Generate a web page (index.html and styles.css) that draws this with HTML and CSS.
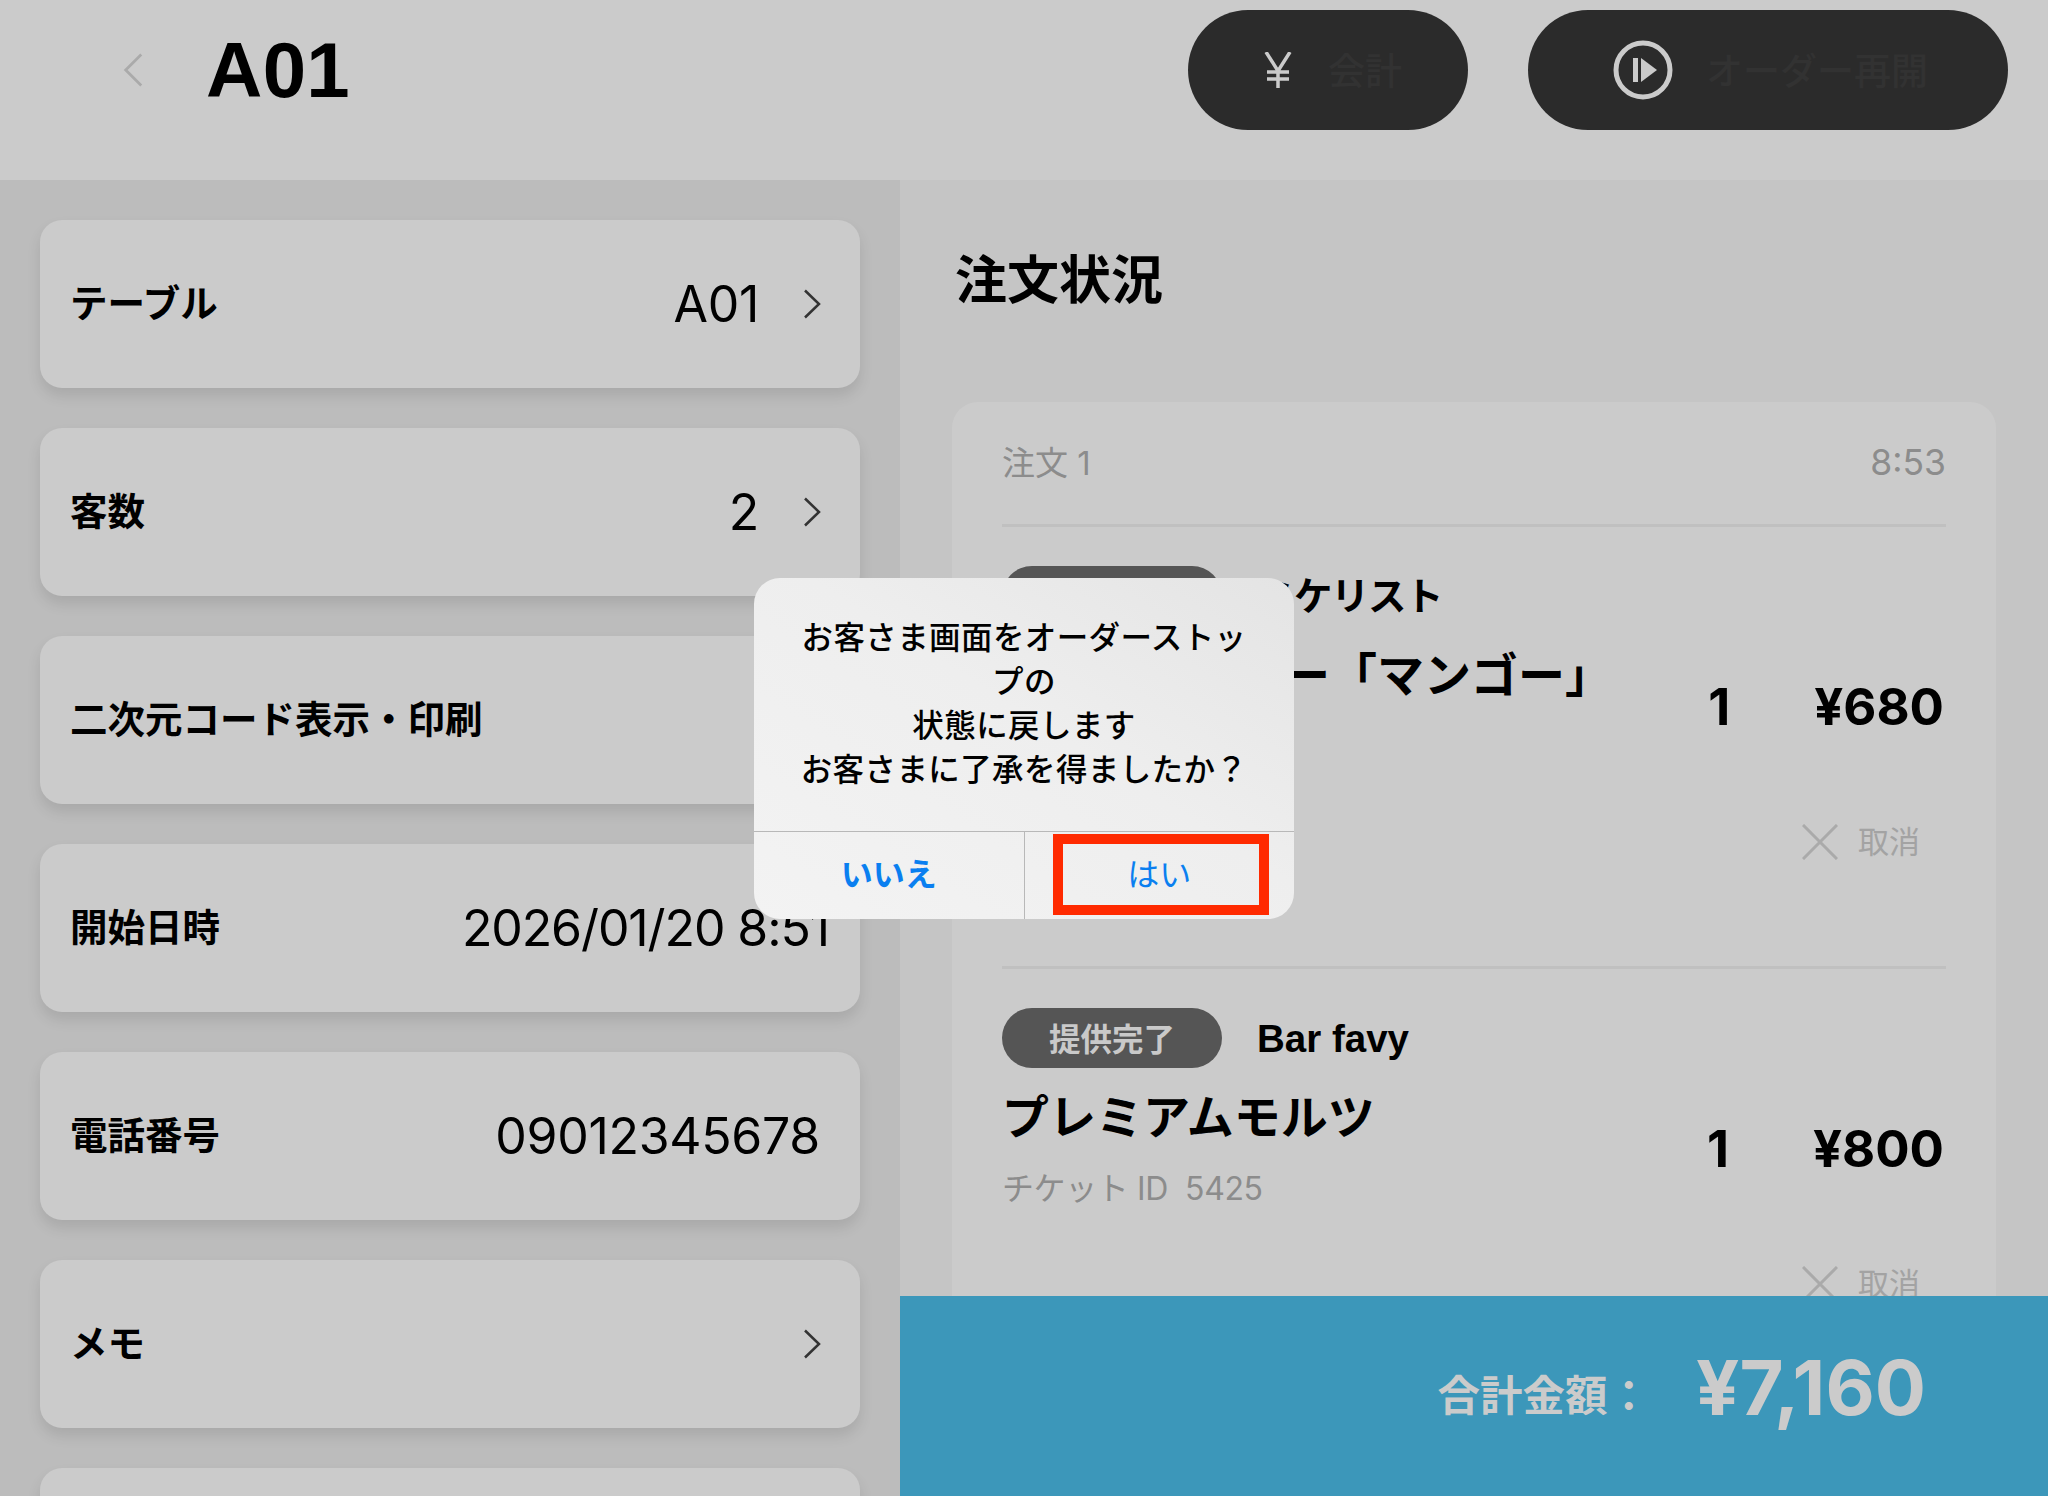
FILE: index.html
```html
<!DOCTYPE html>
<html lang="ja">
<head>
<meta charset="utf-8">
<title>A01</title>
<link rel="stylesheet" href="styles.css">
</head>
<body>
<div class="app">
  <header class="topbar">
    <div class="top-left">
      <svg class="back" viewBox="0 0 24 38"><path d="M21 2 4 19l17 17"/></svg>
      <h1 class="title">A01</h1>
    </div>
    <div class="top-actions">
      <button class="pill pill-pay">
        <svg class="yen" viewBox="0 0 28 36"><path d="M2 0 14 19 26 0M14 19v17M3 20h22M3 27h22"/></svg>
        <span>会計</span>
      </button>
      <button class="pill pill-resume">
        <svg class="resume" viewBox="0 0 60 60"><circle cx="30" cy="30" r="27"/><path class="bar" d="M20 18h5v24h-5z"/><path class="tri" d="M28 18 44 30 28 42z"/></svg>
        <span>オーダー再開</span>
      </button>
    </div>
  </header>
  <main class="body">
    <aside class="side">
      <div class="row"><span class="label">テーブル</span><span class="value">A01</span><svg class="chev" viewBox="0 0 18 30"><path d="M2 1.500 16 15 2 28.500"/></svg></div>
      <div class="row"><span class="label">客数</span><span class="value">2</span><svg class="chev" viewBox="0 0 18 30"><path d="M2 1.500 16 15 2 28.500"/></svg></div>
      <div class="row"><span class="label">二次元コード表示・印刷</span><span class="value"></span><svg class="chev" viewBox="0 0 18 30"><path d="M2 1.500 16 15 2 28.500"/></svg></div>
      <div class="row"><span class="label">開始日時</span><span class="value value-date">2026/01/20 8:51</span></div>
      <div class="row"><span class="label">電話番号</span><span class="value value-tel">09012345678</span></div>
      <div class="row"><span class="label">メモ</span><span class="value"></span><svg class="chev" viewBox="0 0 18 30"><path d="M2 1.500 16 15 2 28.500"/></svg></div>
      <div class="row"></div>
    </aside>
    <section class="orders">
      <h2 class="heading">注文状況</h2>
      <div class="order-card">
        <div class="order-head"><span>注文 1</span><span class="order-time">8:53</span></div>
        <article class="item">
          <div class="item-top"><span class="tag">提供完了</span><span class="shop shop-tight">ミケリスト</span></div>
          <div class="item-body">
            <div class="item-info">
              <div class="item-name">フルーツサワー「マンゴー」</div>
              <div class="ticket">チケット ID&nbsp; 5424</div>
            </div>
            <div class="qty">1</div>
            <div class="price">¥680</div>
          </div>
          <div class="cancel"><svg viewBox="0 0 36 36"><path d="M1 1l34 34M35 1 1 35"/></svg><span>取消</span></div>
        </article>
        <article class="item">
          <div class="item-top"><span class="tag">提供完了</span><span class="shop">Bar favy</span></div>
          <div class="item-body">
            <div class="item-info">
              <div class="item-name">プレミアムモルツ</div>
              <div class="ticket">チケット ID&nbsp; 5425</div>
            </div>
            <div class="qty">1</div>
            <div class="price">¥800</div>
          </div>
          <div class="cancel"><svg viewBox="0 0 36 36"><path d="M1 1l34 34M35 1 1 35"/></svg><span>取消</span></div>
        </article>
      </div>
      <div class="total">
        <span class="total-label">合計金額：</span>
        <span class="total-value">¥7,160</span>
      </div>
    </section>
  </main>
  <div class="dialog">
    <p class="dialog-text">お客さま画面をオーダーストッ<br>プの<br>状態に戻します<br>お客さまに了承を得ましたか？</p>
    <div class="dialog-actions">
      <button class="dialog-btn dialog-no">いいえ</button>
      <button class="dialog-btn">はい</button>
    </div>
    <div class="highlight"></div>
  </div>
</div>
</body>
</html>
```
FILE: styles.css
```css
* { box-sizing: border-box; }
html, body { margin: 0; padding: 0; }
body {
  font-family: "Inter", "Noto Sans CJK JP", sans-serif;
  color: #000;
  background: #c5c5c5;
}
.app {
  position: relative;
  width: 2048px;
  height: 1496px;
  overflow: hidden;
  display: flex;
  flex-direction: column;
}
button { font-family: inherit; border: 0; padding: 0; }

.topbar {
  height: 180px;
  flex: none;
  background: #cbcbcb;
  display: flex;
  justify-content: space-between;
  padding: 10px 40px 0 122px;
}
.top-left { display: flex; align-items: flex-start; gap: 62px; }
.back { width: 22px; height: 38px; margin-top: 41px; fill: none; stroke: #aaa; stroke-width: 3; }
.title {
  margin: 10px 0 0;
  font: 700 78px/100px "Liberation Sans", sans-serif;
  letter-spacing: .3px;
}
.top-actions { display: flex; gap: 60px; }
.pill {
  height: 120px;
  border-radius: 60px;
  background: #2b2b2b;
  color: #323232;
  font-size: 37px;
  font-weight: 500;
  display: flex;
  align-items: center;
}
.pill span { padding-bottom: 2px; }
.pill-pay { width: 280px; padding-left: 76px; gap: 36px; }
.pill-resume { width: 480px; padding-left: 85px; gap: 33px; }
.yen { width: 28px; height: 36px; fill: none; stroke: #cbcbcb; stroke-width: 3.500; }
.resume { width: 60px; height: 60px; }
.resume circle { fill: none; stroke: #cbcbcb; stroke-width: 5; }
.resume .bar, .resume .tri { fill: #cbcbcb; }

.body { flex: 1; display: flex; min-height: 0; }
.side {
  width: 900px;
  flex: none;
  background: #bcbcbc;
  padding: 40px;
  display: flex;
  flex-direction: column;
  gap: 40px;
  overflow: hidden;
}
.row {
  flex: none;
  height: 168px;
  background: #cbcbcb;
  border-radius: 22px;
  box-shadow: 0 8px 14px rgba(0, 0, 0, .1);
  display: flex;
  align-items: center;
  padding: 0 39px 0 30px;
}
.label { font-size: 37.500px; font-weight: 700; flex: 1; padding-bottom: 8px; }
.value { font-size: 50px; color: #000; letter-spacing: -.3px; }
.value-date { margin-right: -8px; letter-spacing: -1.100px; }
.value-tel { margin-right: 1px; }
.chev { width: 18px; height: 30px; margin-left: 44px; fill: none; stroke: #333; stroke-width: 2.500; }

.orders {
  position: relative;
  flex: 1;
  min-width: 0;
  background: #c5c5c5;
  padding: 61px 52px 0;
  overflow: hidden;
}
.heading {
  margin: 0 0 81px 3px;
  font-size: 52px;
  line-height: 80px;
  font-weight: 700;
}
.order-card {
  background: #cbcbcb;
  border-radius: 26px 26px 0 0;
  padding: 0 50px;
}
.order-head {
  height: 125px;
  padding-bottom: 4px;
  display: flex;
  justify-content: space-between;
  align-items: center;
  border-bottom: 3px solid #c0c0c0;
  font-size: 33px;
  color: #8c8c8c;
}
.order-time { font-size: 35.500px; padding-top: 2px; }
.item {
  height: 442px;
  padding-top: 39px;
  border-bottom: 3px solid #c0c0c0;
}
.item-top { display: flex; align-items: center; gap: 35px; }
.tag {
  width: 220px;
  height: 60px;
  padding-bottom: 3px;
  border-radius: 30px;
  background: #555;
  color: #c9c9c9;
  font-size: 31.500px;
  font-weight: 700;
  display: flex;
  align-items: center;
  justify-content: center;
}
.shop { font: 700 38.500px/58px "Liberation Sans", "Noto Sans CJK JP", sans-serif; padding-top: 2px; }
.shop-tight { letter-spacing: -1.500px; }
.item-body { display: flex; align-items: center; margin-top: 19px; }
.item-info { flex: 1; min-width: 0; }
.item-name { font-size: 47px; line-height: 60px; font-weight: 700; white-space: nowrap; }
.ticket { margin-top: 17px; font-size: 32px; line-height: 50px; letter-spacing: -.4px; color: #8c8c8c; }
.qty { font-size: 51px; font-weight: 700; margin-right: 84px; padding-bottom: 4px; }
.price { font-size: 51px; font-weight: 700; margin-right: 2px; padding-bottom: 4px; }
.cancel {
  margin-top: 47px;
  margin-right: 26px;
  height: 40px;
  display: flex;
  justify-content: flex-end;
  align-items: center;
  gap: 20px;
  font-size: 31px;
  color: #a3a3a3;
}
.cancel svg { width: 36px; height: 36px; margin-top: 6px; fill: none; stroke: #aaa; stroke-width: 3; }

.total {
  position: absolute;
  left: 0;
  right: 0;
  bottom: 0;
  height: 200px;
  background: #3c97ba;
  color: #cbcbcb;
  display: flex;
  justify-content: flex-end;
  align-items: center;
  gap: 46px;
  padding: 0 122px 18px 0;
}
.total-label { font-size: 42.500px; line-height: 60px; font-weight: 700; margin-top: 18px; }
.total-value { font-size: 76px; line-height: 100px; font-weight: 700; }

.dialog {
  position: absolute;
  left: 754px;
  top: 578px;
  width: 540px;
  height: 341px;
  border-radius: 26px;
  background: linear-gradient(to bottom left, #e4e4e4 0%, #eeeeee 45%, #f3f3f3 100%);
  display: flex;
  flex-direction: column;
  overflow: hidden;
}
.dialog-text {
  flex: 1;
  margin: 0;
  padding-top: 38px;
  text-align: center;
  font-size: 31.500px;
  line-height: 44px;
  font-weight: 500;
  letter-spacing: .4px;
  white-space: nowrap;
}
.dialog-actions { height: 88px; flex: none; display: flex; border-top: 1px solid #b8b8b8; }
.dialog-btn {
  flex: 1;
  background: transparent;
  color: #0a7ff0;
  font-size: 32px;
  font-weight: 400;
  padding-bottom: 8px;
}
.dialog-no { font-weight: 700; border-right: 1px solid #b8b8b8; }
.highlight {
  position: absolute;
  left: 299px;
  top: 256px;
  width: 216px;
  height: 81px;
  border: 10px solid #ff2a00;
}
```
